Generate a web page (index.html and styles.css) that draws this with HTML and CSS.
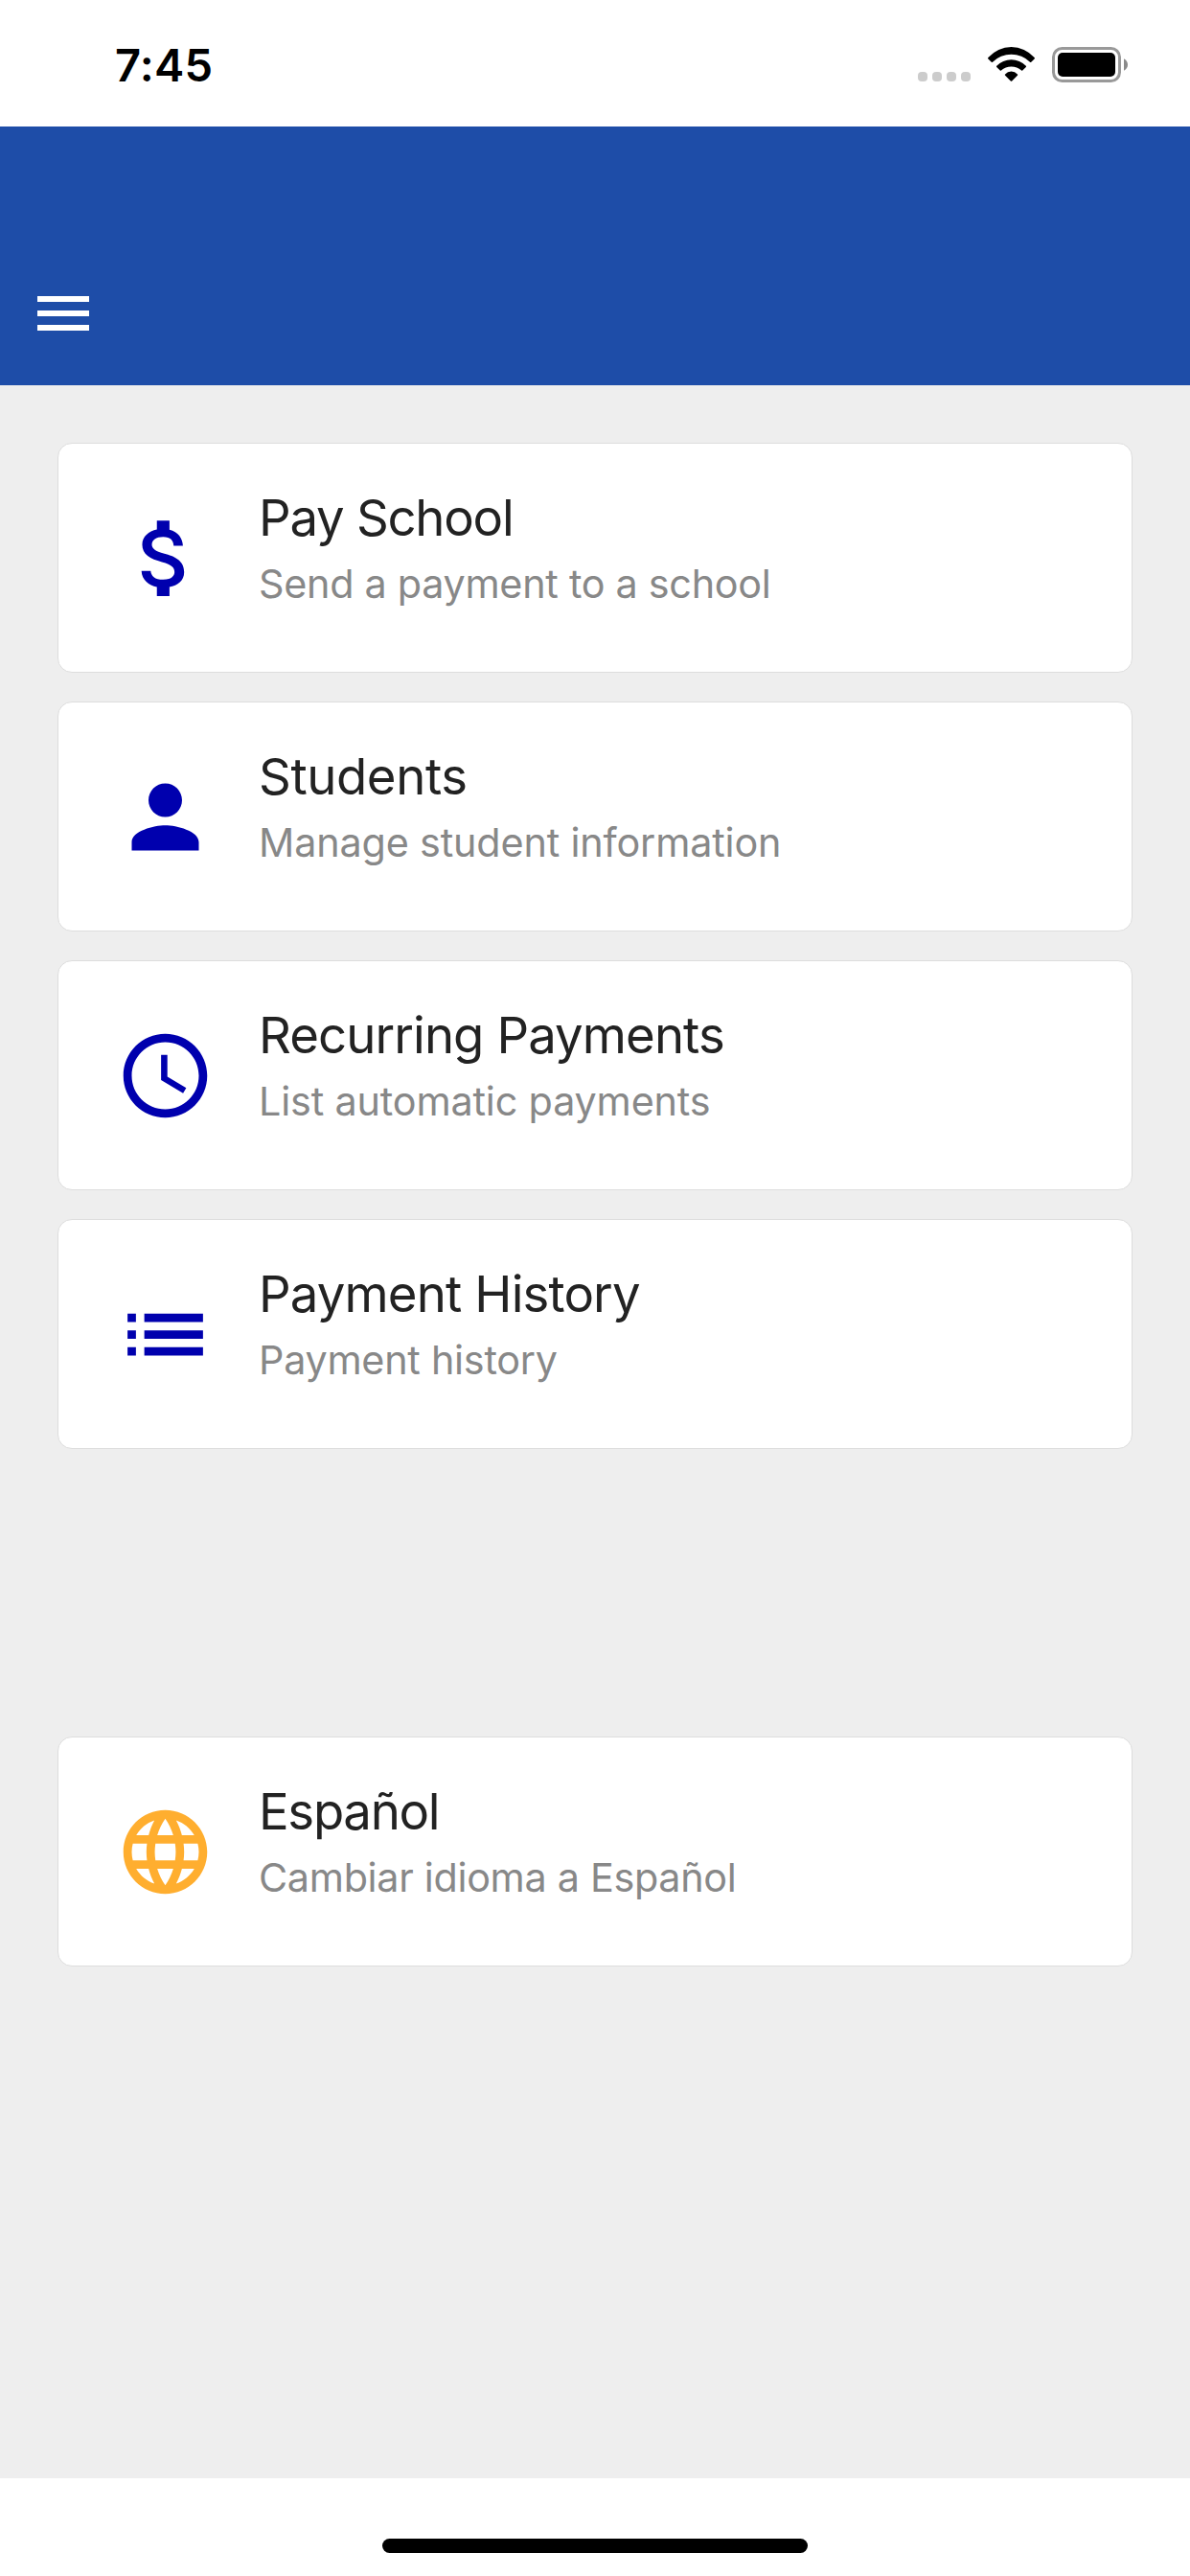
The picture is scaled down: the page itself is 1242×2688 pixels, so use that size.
FILE: index.html
```html
<!DOCTYPE html>
<html lang="en">
<head>
<meta charset="utf-8">
<title>School Payments</title>
<link rel="stylesheet" href="styles.css">
</head>
<body>
<div class="screen">
  <div class="status-bar">
    <span class="time">7:45</span>
    <div class="indicators">
      <div class="signal"><i></i><i></i><i></i><i></i></div>
      <svg class="wifi" viewBox="0 0 49 36"><path d="M.4 11A32 32 0 0 1 48.6 11Q49.4 11.8 48.6 12.5L45 15.9Q44.5 16.2 44 15.8A27.7 27.7 0 0 0 5 15.8Q4.500 16.200 4 15.900L.4 12.500Q-.4 11.800 .4 11Z"/><path d="M9.200 19.700A21.300 21.300 0 0 1 39.800 19.700Q40.400 20.400 39.800 21L36.200 24.500Q35.700 25 35.100 24.500A16.200 16.200 0 0 0 13.900 24.500Q13.300 25 12.800 24.500L9.200 21Q8.600 20.400 9.200 19.700Z"/><path d="M18.100 28.400A8.500 8.500 0 0 1 30.900 28.400Q31.600 29 30.900 29.700L25.200 35.400Q24.500 36.100 23.800 35.400L18.100 29.700Q17.400 29 18.100 28.400Z"/></svg>
      <svg class="battery" viewBox="0 0 80 37"><rect x="1.500" y="1.500" width="69" height="34" rx="9" fill="none" stroke="#999" stroke-width="3"/><rect x="6" y="6" width="60" height="25" rx="5"/><path d="M75 12.200Q79 14.500 79 18.500Q79 22.500 75 24.800Z" fill="#8a8a8a"/></svg>
    </div>
  </div>
  <header class="header">
    <svg class="menu" viewBox="0 0 24 24"><path d="M3 18h18v-2H3v2zm0-5h18v-2H3v2zm0-7v2h18V6H3z"/></svg>
  </header>
  <main class="content">
    <div class="card pay">
      <svg class="icon" viewBox="0 0 24 24"><path d="M11.800 10.900c-2.270-.59-3-1.200-3-2.150 0-1.090 1.010-1.850 2.700-1.850 1.780 0 2.440.85 2.500 2.100h2.210c-.07-1.720-1.120-3.300-3.210-3.810V3h-3v2.160c-1.940.42-3.500 1.680-3.500 3.610 0 2.310 1.910 3.460 4.700 4.130 2.500.6 3 1.480 3 2.410 0 .69-.49 1.790-2.700 1.790-2.060 0-2.870-.92-2.980-2.100h-2.200c.12 2.190 1.760 3.420 3.680 3.830V21h3v-2.150c1.950-.37 3.500-1.500 3.500-3.550 0-2.840-2.430-3.810-4.700-4.400z"/></svg>
      <div class="text"><div class="title">Pay School</div><div class="subtitle">Send a payment to a school</div></div>
    </div>
    <div class="card students">
      <svg class="icon" viewBox="0 0 24 24"><path d="M12 12c2.210 0 4-1.790 4-4s-1.790-4-4-4-4 1.790-4 4 1.790 4 4 4zm0 2c-2.670 0-8 1.340-8 4v2h16v-2c0-2.660-5.330-4-8-4z"/></svg>
      <div class="text"><div class="title">Students</div><div class="subtitle">Manage student information</div></div>
    </div>
    <div class="card recurring">
      <svg class="icon" viewBox="0 0 24 24"><path d="M11.990 2C6.470 2 2 6.480 2 12s4.470 10 9.990 10C17.520 22 22 17.520 22 12S17.520 2 11.990 2zM12 20c-4.420 0-8-3.580-8-8s3.580-8 8-8 8 3.580 8 8-3.580 8-8 8zm.5-13H11v6l5.250 3.150.75-1.230-4.500-2.670z"/></svg>
      <div class="text"><div class="title">Recurring Payments</div><div class="subtitle">List automatic payments</div></div>
    </div>
    <div class="card history">
      <svg class="icon" viewBox="0 0 24 24"><path d="M3 13h2v-2H3v2zm0 4h2v-2H3v2zm0-8h2V7H3v2zm4 4h14v-2H7v2zm0 4h14v-2H7v2zM7 7v2h14V7H7z"/></svg>
      <div class="text"><div class="title">Payment History</div><div class="subtitle">Payment history</div></div>
    </div>
    <div class="card language">
      <svg class="icon" viewBox="0 0 24 24"><path d="M11.990 2C6.470 2 2 6.480 2 12s4.470 10 9.990 10C17.520 22 22 17.520 22 12S17.520 2 11.990 2zm6.930 6h-2.950c-.32-1.250-.78-2.450-1.380-3.560 1.840.63 3.370 1.910 4.330 3.560zM12 4.040c.83 1.200 1.480 2.530 1.910 3.960h-3.820c.43-1.430 1.080-2.760 1.910-3.960zM4.260 14C4.100 13.360 4 12.690 4 12s.1-1.360.26-2h3.380c-.08.66-.14 1.320-.14 2 0 .68.06 1.340.14 2H4.260zm.82 2h2.950c.32 1.250.78 2.450 1.380 3.560-1.840-.63-3.370-1.900-4.330-3.560zm2.950-8H5.080c.96-1.660 2.490-2.930 4.330-3.560C8.810 5.550 8.350 6.750 8.030 8zM12 19.960c-.83-1.200-1.480-2.530-1.910-3.960h3.820c-.43 1.430-1.080 2.760-1.910 3.960zM14.340 14H9.660c-.09-.66-.16-1.320-.16-2 0-.68.07-1.350.16-2h4.680c.09.65.16 1.320.16 2 0 .68-.07 1.340-.16 2zm.25 5.560c.6-1.110 1.060-2.310 1.380-3.560h2.950c-.96 1.650-2.490 2.930-4.330 3.560zM16.360 14c.08-.66.14-1.320.14-2 0-.68-.06-1.340-.14-2h3.380c.16.64.26 1.310.26 2s-.1 1.360-.26 2h-3.380z"/></svg>
      <div class="text"><div class="title">Español</div><div class="subtitle">Cambiar idioma a Español</div></div>
    </div>
  </main>
  <footer class="home-area"><div class="home-indicator"></div></footer>
</div>
</body>
</html>
```
FILE: styles.css
```css
* { box-sizing: border-box; }
body { margin: 0; background: #fff; font-family: Inter, "Liberation Sans", sans-serif; }
svg { display: block; flex: none; }
.screen { display: flex; flex-direction: column; width: 1242px; height: 2688px; }

.status-bar { flex: none; display: flex; justify-content: space-between; align-items: flex-start; height: 132px; padding: 39px 64px 0 120px; }
.time { font-size: 47px; line-height: 58px; font-weight: 600; letter-spacing: 0.2px; }
.indicators { display: flex; align-items: flex-start; padding-top: 10px; }
.signal { display: flex; gap: 5px; margin: 26px 18px 0 0; }
.signal i { width: 10px; height: 10px; border-radius: 4px; background: #ccc; }
.wifi { width: 49px; height: 36px; margin-right: 18px; }
.battery { width: 80px; height: 37px; }

.header { flex: none; display: flex; align-items: flex-end; height: 270px; padding: 0 30px 39px; background: #1e4da8; }
.menu { width: 72px; height: 72px; fill: #fff; }

.content { flex: 1; display: flex; flex-direction: column; gap: 30px; padding: 60px; background: #eee; }
.card { display: flex; align-items: flex-start; height: 240px; padding: 45px 59px 0; background: #fff; border: 1px solid #ddd; border-radius: 15px; }
.icon { width: 105px; height: 105px; margin: 22px 45px 0 0; fill: #0000ae; }
.language { margin-top: 270px; }
.language .icon { fill: #ffae2f; }
.title { font-size: 52.7px; line-height: 64px; letter-spacing: -0.9px; color: #222; white-space: nowrap; }
.subtitle { margin-top: 12px; font-size: 41.3px; line-height: 50px; letter-spacing: -0.2px; color: #888; white-space: nowrap; }

/* Tracking per entry */
.pay .title { letter-spacing: -1.25px; }
.students .title { letter-spacing: -0.4px; }
.history .title { letter-spacing: -0.85px; }
.language .title { letter-spacing: -1.3px; }
.pay .subtitle { letter-spacing: -0.27px; }
.students .subtitle { letter-spacing: -0.15px; }
.recurring .subtitle { letter-spacing: -0.15px; }
.history .subtitle { letter-spacing: -0.25px; }
.language .subtitle { letter-spacing: -0.3px; }

.home-area { flex: none; display: flex; justify-content: center; height: 102px; padding-top: 63px; }
.home-indicator { width: 444px; height: 15px; border-radius: 8px; background: #000; }
```
